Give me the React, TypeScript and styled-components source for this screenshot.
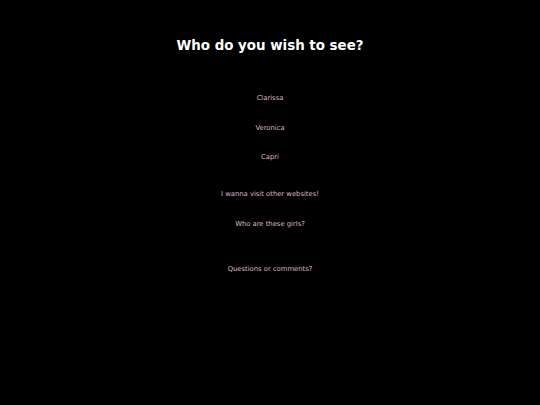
import React from "react";
import styled, { createGlobalStyle } from "styled-components";

const Global = createGlobalStyle`
  html, body { margin: 0; padding: 0; background: #000; }
  body { font-family: "DejaVu Sans", Verdana, sans-serif; }
`;

const Page = styled.div`
  width: 540px;
  height: 405px;
  background: #000;
  display: flex;
  flex-direction: column;
  align-items: center;
`;

const Title = styled.h1`
  margin: 37px 0 0;
  font-size: 13.4px;
  font-weight: bold;
  color: #fff;
  line-height: 18px;
`;

const Group = styled.div<{ $top: number; $gap: number }>`
  margin-top: ${(p) => p.$top}px;
  display: flex;
  flex-direction: column;
  align-items: center;
  gap: ${(p) => p.$gap}px;
`;

const Link = styled.a`
  font-size: 6.8px;
  line-height: 8px;
  color: #dcb8c8;
  text-decoration: none;
`;

export default function App() {
  return (
    <Page>
      <Global />
      <Title>Who do you wish to see?</Title>
      <Group $top={39} $gap={21.5}>
        <Link href="#">Clarissa</Link>
        <Link href="#">Veronica</Link>
        <Link href="#">Capri</Link>
      </Group>
      <Group $top={29} $gap={22}>
        <Link href="#">I wanna visit other websites!</Link>
        <Link href="#">Who are these girls?</Link>
      </Group>
      <Group $top={37} $gap={0}>
        <Link href="#">Questions or comments?</Link>
      </Group>
    </Page>
  );
}
